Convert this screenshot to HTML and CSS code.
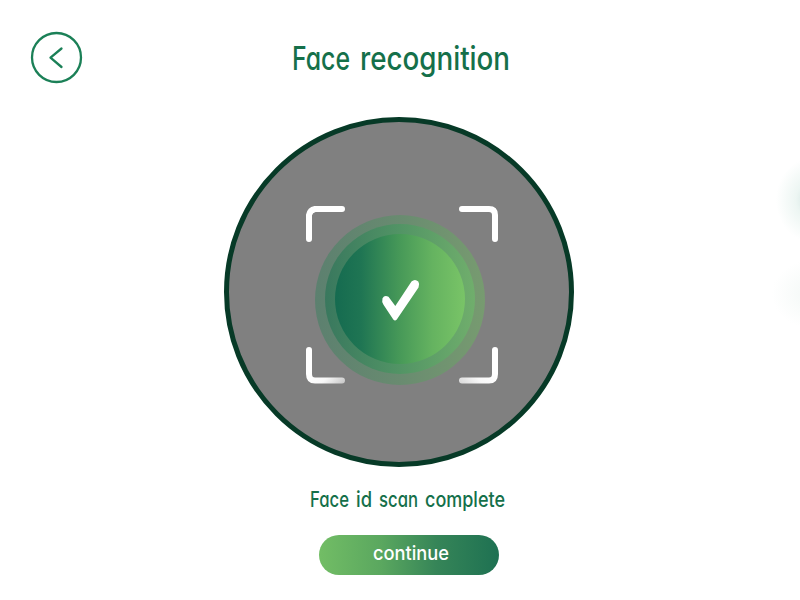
FILE: index.html
```html
<!DOCTYPE html>
<html lang="en">
<head>
<meta charset="utf-8">
<title>Face recognition</title>
<link rel="stylesheet" href="styles.css">
</head>
<body>
<main class="screen">
  <header class="header">
    <button class="back" aria-label="Back">
      <svg width="52" height="52" viewBox="0 0 52 52"><circle cx="25.500" cy="26.500" r="24.500"/><path d="M30.500 17.500L19.500 26.700L30.500 36"/></svg>
    </button>
    <h1 class="title"><svg width="218" height="44"><text x="0" y="32" textLength="58" lengthAdjust="spacingAndGlyphs">Face</text> <text x="68" y="32" textLength="150" lengthAdjust="spacingAndGlyphs">recognition</text></svg></h1>
  </header>
  <section class="scanner">
    <svg class="frame" width="194" height="180" viewBox="0 0 194 180">
      <defs>
        <linearGradient id="fade-left" gradientUnits="userSpaceOnUse" x1="12" y1="160" x2="34" y2="184"><stop offset="0" stop-color="#fff"/><stop offset="0.500" stop-color="#f8f8f8"/><stop offset="1" stop-color="#c4c4c4"/></linearGradient>
        <linearGradient id="fade-right" gradientUnits="userSpaceOnUse" x1="182" y1="160" x2="160" y2="184"><stop offset="0" stop-color="#fff"/><stop offset="0.500" stop-color="#f8f8f8"/><stop offset="1" stop-color="#d8d8d8"/></linearGradient>
      </defs>
      <path d="M4 34V10Q5 5 10 4H37M157 4H184Q190 4 190 10V34"/>
      <path class="lower-left" d="M4 145V169Q4 175.500 10 175.500H37"/>
      <path class="lower-right" d="M157 175.500H184Q190 175.500 190 169V145"/>
    </svg>
    <div class="halo"><div class="ring"><div class="disc">
      <svg width="42" height="46" viewBox="0 0 42 46"><path d="M3.500 21.200Q5.500 17.500 9.500 19.700L16.300 29L32.500 4.500Q36 1.500 39.300 4.500Q41 7 39.500 10.500L17.800 42.500Q16 44.500 14.300 42.500L4.500 27.700Q2.500 24.500 3.500 21.200Z"/></svg>
    </div></div></div>
  </section>
  <p class="status"><svg width="196" height="30"><text x="0" y="21" textLength="39" lengthAdjust="spacingAndGlyphs">Face</text> <text x="46" y="21" textLength="16" lengthAdjust="spacingAndGlyphs">id</text> <text x="69" y="21" textLength="39" lengthAdjust="spacingAndGlyphs">scan</text> <text x="115" y="21" textLength="80" lengthAdjust="spacingAndGlyphs">complete</text></svg></p>
  <button class="continue"><svg width="76" height="30"><text x="2" y="20" textLength="76" lengthAdjust="spacingAndGlyphs">continue</text></svg></button>
</main>
</body>
</html>
```
FILE: styles.css
```css
* { box-sizing: border-box; }
body { margin: 0; font-family: Inter, "Open Sans", sans-serif; font-feature-settings: "cv11" 1; }
svg { display: block; overflow: visible; }
button { border: 0; padding: 0; font: inherit; font-feature-settings: inherit; }
.screen {
  width: 800px; height: 600px; overflow: hidden;
  display: flex; flex-direction: column;
  background:
    radial-gradient(ellipse 36px 42px at 812px 200px, #cee2de 0%, #edf6f3 45%, transparent 100%),
    radial-gradient(ellipse 40px 34px at 812px 294px, #f3f8f6, transparent),
    #fff;
}
.header { display: flex; height: 117px; padding: 31px 0 0 30px; }
.back { width: 52px; height: 52px; margin-left: 1px; background: none; }
.back svg { fill: none; stroke: #1b8057; stroke-width: 2.3; stroke-linecap: round; stroke-linejoin: round; }
.title { margin: 7px 0 0 209px; font-size: 32px; line-height: 1; font-weight: 450; }
.title text, .status text { fill: #15704a; }
.scanner {
  width: 350px; height: 350px; margin-left: 224px;
  display: grid; place-items: center;
  border: 5px solid #073a27; border-radius: 50%; background: #808080;
}
.scanner > * { grid-area: 1 / 1; }
.frame { margin: 5px 0 0 6px; fill: none; stroke: #fff; stroke-width: 6; stroke-linecap: round; stroke-linejoin: round; }
.lower-left { stroke: url(#fade-left); }
.lower-right { stroke: url(#fade-right); }
.halo, .ring, .disc { border-radius: 50%; display: grid; place-items: center; }
.halo { width: 170px; height: 170px; margin: 15px 0 0 2px; background: linear-gradient(90deg, #5c806f, #698b70 50%, #779b70); }
.ring { width: 150px; height: 150px; margin-bottom: 1px; background: linear-gradient(90deg, #39785e, #529465 50%, #70ae6c); }
.disc { width: 130px; height: 130px; background: linear-gradient(90deg, #156b50, #1f7553 20%, #479958 50%, #65b360 75%, #79c467); }
.disc svg { fill: #fff; margin-top: 2px; }
.status { margin: 19px 0 0 310px; font-size: 21px; font-weight: 450; }
.continue {
  width: 180px; height: 40px; margin: 19px 0 0 319px;
  display: grid; place-items: center; color: #fff; font-size: 20px; font-weight: 500;
  border-radius: 20px; background: linear-gradient(90deg, #72bd65, #5aa75f 35%, #368558 65%, #1e7152);
}
.continue text { fill: #fff; }
```
